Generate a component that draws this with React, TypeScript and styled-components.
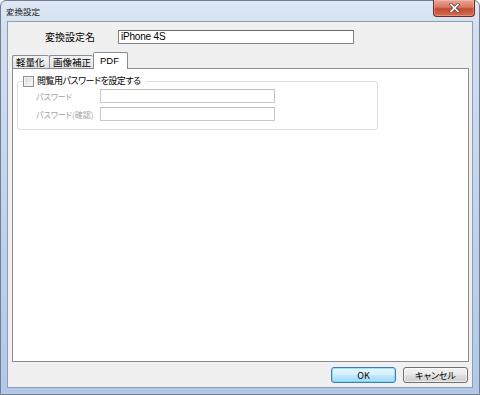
import React from "react";
import styled, { createGlobalStyle } from "styled-components";

const Global = createGlobalStyle`
  html, body { margin: 0; padding: 0; }
  body {
    width: 480px; height: 395px; overflow: hidden;
    font-family: "Noto Sans CJK JP", "Liberation Sans", sans-serif;
    font-feature-settings: "palt" 1;
  }
`;

const Window = styled.div`
  width: 480px;
  height: 395px;
  box-sizing: border-box;
  display: flex;
  flex-direction: column;
  border: 1px solid #707f94;
  border-radius: 6px 6px 0 0;
  background: linear-gradient(to bottom, #dfe8f4 0px, #d2dfef 30px, #c2d4ec 200px, #b2c8e6 395px);
`;

const TitleBar = styled.div`
  height: 20px;
  display: flex;
  align-items: flex-start;
  padding-left: 5px;
  position: relative;
`;

const Title = styled.span`
  font-size: 8.5px;
  line-height: 9px;
  margin-top: 6px;
  color: #1a1a1a;
`;

const CloseButton = styled.div`
  position: absolute;
  right: 4px;
  top: -1px;
  width: 42px;
  height: 17px;
  box-sizing: border-box;
  border: 1px solid #6d2a22;
  border-top: none;
  border-radius: 0 0 4px 4px;
  background: linear-gradient(to bottom, #e9a796 0%, #d9775f 45%, #c24c33 55%, #d46d51 100%);
  box-shadow: inset 0 0 0 1px rgba(255, 210, 200, 0.35);
  display: flex;
  align-items: center;
  justify-content: center;
`;

const Client = styled.div`
  flex: 1;
  margin: 0 6px 6px 6px;
  background: #f0f0f0;
  border: 1px solid #8d9db3;
  display: flex;
  flex-direction: column;
  padding: 8px 3px 4px 4px;
`;

const NameRow = styled.div`
  display: flex;
  align-items: center;
  height: 14px;
`;

const NameLabel = styled.span`
  font-size: 10px;
  line-height: 12px;
  color: #000;
  margin-left: 33px;
  width: 73px;
  white-space: nowrap;
`;

const TextBox = styled.div<{ $w: number; $disabled?: boolean }>`
  width: ${(p) => p.$w}px;
  height: 14px;
  box-sizing: border-box;
  border: 1px solid ${(p) => (p.$disabled ? "#c8c8c8" : "#828282")};
  border-top-color: ${(p) => (p.$disabled ? "#bdbdbd" : "#6a6a6a")};
  background: #fff;
  font-family: "Liberation Sans", sans-serif;
  font-size: 10px;
  line-height: 12px;
  padding-left: 2px;
  letter-spacing: -0.2px;
  color: #000;
`;

const Tabs = styled.div`
  display: flex;
  align-items: flex-end;
  height: 16px;
  margin-top: 9px;
  position: relative;
  z-index: 1;
  margin-bottom: -1px;
`;

const Tab = styled.div<{ $active?: boolean; $w: number }>`
  width: ${(p) => p.$w}px;
  height: ${(p) => (p.$active ? 17 : 14)}px;
  box-sizing: border-box;
  border: 1px solid #898c95;
  border-right: ${(p) => (p.$active ? "1px solid #898c95" : "none")};
  border-bottom: ${(p) => (p.$active ? "none" : "1px solid #898c95")};
  border-radius: 2px 2px 0 0;
  background: ${(p) => (p.$active ? "#fff" : "linear-gradient(to bottom, #f3f3f3, #e2e2e2)")};
  font-size: 9.5px;
  line-height: ${(p) => (p.$active ? 15 : 12)}px;
  padding-left: ${(p) => (p.$active ? 6 : 3)}px;
  color: #000;
  font-family: ${(p) => (p.$active ? '"Liberation Sans", sans-serif' : '"Noto Sans CJK JP", sans-serif')};
  white-space: nowrap;
`;

const Panel = styled.div`
  flex: 1;
  background: #fff;
  border: 1px solid #898c95;
  padding: 6px 4px;
`;

const Group = styled.fieldset`
  width: 361px;
  height: 55px;
  box-sizing: border-box;
  margin: 0;
  border: 1px solid #d8e0e6;
  border-radius: 3px;
  padding: 0 0 0 18px;
`;

const Legend = styled.legend`
  display: flex;
  align-items: center;
  gap: 2px;
  padding: 0 5px 0 0;
  margin-left: -13px;
  font-size: 9px;
  letter-spacing: -0.5px;
  color: #000;
  line-height: 12px;
`;

const CheckBox = styled.span`
  width: 11px;
  height: 11px;
  box-sizing: border-box;
  border: 1px solid #8f8f8f;
  background: linear-gradient(135deg, #d8d8d8, #fafafa);
  box-shadow: inset 0 0 0 1px #f4f4f4;
  display: inline-block;
  margin-right: 1px;
`;

const FieldRow = styled.div<{ $first?: boolean }>`
  display: flex;
  align-items: center;
  height: 14px;
  margin-top: ${(p) => (p.$first ? 2 : 4)}px;
`;

const FieldLabel = styled.span`
  width: 64px;
  font-size: 8px;
  color: #a3a3a3;
  white-space: nowrap;
`;

const ButtonRow = styled.div`
  display: flex;
  justify-content: flex-end;
  align-items: center;
  gap: 7px;
  margin-top: 5px;
  padding-right: 1px;
`;

const Button = styled.div<{ $default?: boolean }>`
  width: 65px;
  height: 16px;
  box-sizing: border-box;
  border: 1px solid ${(p) => (p.$default ? "#3c7fb1" : "#707070")};
  border-radius: 3px;
  background: ${(p) =>
    p.$default
      ? "linear-gradient(to bottom, #eaf6fd 0%, #d9f0fc 45%, #bee6fd 55%, #a7d9f5 100%)"
      : "linear-gradient(to bottom, #f2f2f2 0%, #ebebeb 45%, #dddddd 55%, #cfcfcf 100%)"};
  box-shadow: inset 0 0 0 1px ${(p) => (p.$default ? "rgba(72, 212, 255, 0.5)" : "rgba(255,255,255,0.6)")};
  display: flex;
  align-items: center;
  justify-content: center;
  font-size: 9px;
  color: #000;
`;

export default function App() {
  return (
    <>
      <Global />
      <Window>
        <TitleBar>
          <Title>変換設定</Title>
          <CloseButton>
            <svg width="11" height="10" viewBox="0 0 11 10">
              <path d="M2 1.5 L9 8.5 M9 1.5 L2 8.5" stroke="#6b4a44" strokeWidth="3.2" strokeLinecap="square" />
              <path d="M2 1.5 L9 8.5 M9 1.5 L2 8.5" stroke="#fff" strokeWidth="1.6" strokeLinecap="square" />
            </svg>
          </CloseButton>
        </TitleBar>
        <Client>
          <NameRow>
            <NameLabel>変換設定名</NameLabel>
            <TextBox $w={236}>iPhone 4S</TextBox>
          </NameRow>
          <Tabs>
            <Tab $w={37}>軽量化</Tab>
            <Tab $w={44}>画像補正</Tab>
            <Tab $w={35} $active>PDF</Tab>
          </Tabs>
          <Panel>
            <Group>
              <Legend>
                <CheckBox />
                閲覧用パスワードを設定する
              </Legend>
              <FieldRow $first>
                <FieldLabel>パスワード</FieldLabel>
                <TextBox $w={175} $disabled />
              </FieldRow>
              <FieldRow>
                <FieldLabel>パスワード(確認)</FieldLabel>
                <TextBox $w={175} $disabled />
              </FieldRow>
            </Group>
          </Panel>
          <ButtonRow>
            <Button $default>OK</Button>
            <Button>キャンセル</Button>
          </ButtonRow>
        </Client>
      </Window>
    </>
  );
}
